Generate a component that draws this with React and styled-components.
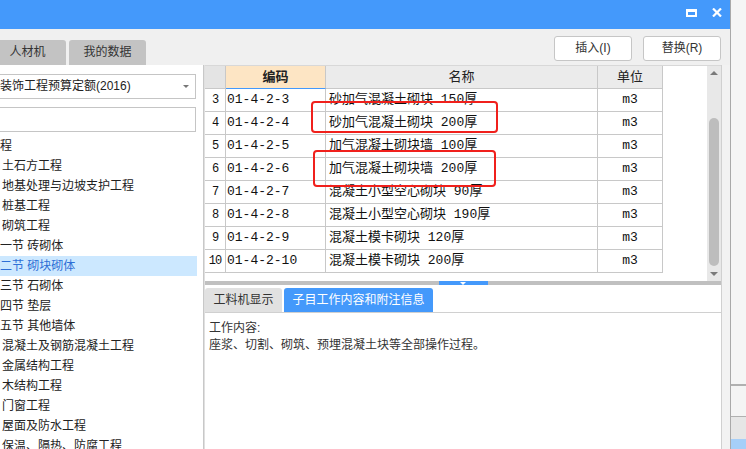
import React from "react";
import styled, { createGlobalStyle } from "styled-components";

const GlobalStyle = createGlobalStyle`
  html, body {
    margin: 0;
    padding: 0;
    overflow: hidden;
  }
  body {
    font-family: "Liberation Sans", "Noto Sans CJK SC", sans-serif;
    font-size: 12px;
    color: #222;
  }
`;

// the tree is scrolled sideways in the screenshot, so only the visible part of each label is kept
const tree = [
  { text: "程", level: 0 },
  { text: "土石方工程", level: 1 },
  { text: "地基处理与边坡支护工程", level: 1 },
  { text: "桩基工程", level: 1 },
  { text: "砌筑工程", level: 1 },
  { text: "一节 砖砌体", level: 2 },
  { text: "二节 砌块砌体", level: 2, selected: true },
  { text: "三节 石砌体", level: 2 },
  { text: "四节 垫层", level: 2 },
  { text: "五节 其他墙体", level: 2 },
  { text: "混凝土及钢筋混凝土工程", level: 1 },
  { text: "金属结构工程", level: 1 },
  { text: "木结构工程", level: 1 },
  { text: "门窗工程", level: 1 },
  { text: "屋面及防水工程", level: 1 },
  { text: "保温、隔热、防腐工程", level: 1 },
];

const rows = [
  { n: 3, code: "01-4-2-3", name: "砂加气混凝土砌块 150厚" },
  { n: 4, code: "01-4-2-4", name: "砂加气混凝土砌块 200厚" },
  { n: 5, code: "01-4-2-5", name: "加气混凝土砌块墙 100厚" },
  { n: 6, code: "01-4-2-6", name: "加气混凝土砌块墙 200厚" },
  { n: 7, code: "01-4-2-7", name: "混凝土小型空心砌块 90厚" },
  { n: 8, code: "01-4-2-8", name: "混凝土小型空心砌块 190厚" },
  { n: 9, code: "01-4-2-9", name: "混凝土模卡砌块 120厚" },
  { n: 10, code: "01-4-2-10", name: "混凝土模卡砌块 200厚" },
];

const indents = [0, 2, 0];

const App = () => {
  return (
    <Screen>
      <GlobalStyle />
      <Window>
        <TitleBar>
          <svg width="11" height="8" viewBox="0 0 11 8">
            <rect x="1" y="1" width="9" height="6" fill="none" stroke="#fff" strokeWidth="2" />
            <rect x="0" y="0" width="11" height="3" fill="#fff" />
          </svg>
          <svg width="10" height="9" viewBox="0 0 10 9">
            <path d="M1 0.5 L9 8.5 M9 0.5 L1 8.5" stroke="#fff" strokeWidth="2.2" />
          </svg>
        </TitleBar>

        <Toolbar>
          <TopTabs>
            <TopTab>人材机</TopTab>
            <TopTab>我的数据</TopTab>
          </TopTabs>
          <Buttons>
            <Button>插入(I)</Button>
            <Button>替换(R)</Button>
          </Buttons>
        </Toolbar>

        <Body>
          <LeftPanel>
            <Select>
              <span>装饰工程预算定额(2016)</span>
              <Caret />
            </Select>
            <Search />
            <TreeList>
              {tree.map((item, i) => (
                <TreeRow key={i} $indent={indents[item.level]} $selected={item.selected}>
                  {item.text}
                </TreeRow>
              ))}
            </TreeList>
          </LeftPanel>

          <RightPanel>
            <GridArea>
              <TableWrap>
                <HeadRow>
                  <HeadCell $num />
                  <HeadCell $active>编码</HeadCell>
                  <HeadCell>名称</HeadCell>
                  <HeadCell>单位</HeadCell>
                </HeadRow>
                {rows.map((r) => (
                  <Row key={r.n}>
                    <NumCell>{r.n}</NumCell>
                    <Cell>{r.code}</Cell>
                    <Cell $pad={3}>{r.name}</Cell>
                    <Cell $center>m3</Cell>
                  </Row>
                ))}
              </TableWrap>
              <VScroll>
                <ArrowBox>
                  <ArrowUp />
                </ArrowBox>
                <Track>
                  <Thumb />
                </Track>
                <ArrowBox>
                  <ArrowDown />
                </ArrowBox>
              </VScroll>
            </GridArea>

            <Splitter>
              <SplitHandle>
                <SmallDown />
              </SplitHandle>
            </Splitter>

            <BottomPanel>
              <BottomTabs>
                <BottomTab>工料机显示</BottomTab>
                <BottomTab $active>子目工作内容和附注信息</BottomTab>
              </BottomTabs>
              <Notes>
                <div>工作内容:</div>
                <div>座浆、切割、砌筑、预埋混凝土块等全部操作过程。</div>
              </Notes>
            </BottomPanel>
          </RightPanel>
          <Frame />
        </Body>

        <Mark $left={311} $top={101} $w={187} $h={32} />
        <Mark $left={313} $top={150} $w={183} $h={37} />
      </Window>

      <Behind>
        <BehindTop />
        <BehindLine />
        <BehindBand $h={30} $bg="#f4f4f4" />
        <BehindLine $thin />
        <BehindBand $h={22} $bg="#e6e6e6" />
        <BehindBand $h={10} $bg="#a6cff8" />
      </Behind>
    </Screen>
  );
};

export default App;

const Screen = styled.div`
  display: flex;
  width: 746px;
  height: 449px;
  overflow: hidden;
  background: #f3f3f3;
`;

const Window = styled.div`
  position: relative;
  display: flex;
  flex-direction: column;
  width: 730px;
  height: 449px;
  border-right: 1px solid #a9a9a9;
  background: #f0f0f0;
  flex-shrink: 0;
`;

const TitleBar = styled.div`
  height: 29px;
  background: #4499fb;
  display: flex;
  justify-content: flex-end;
  align-items: center;
  gap: 15px;
  padding-right: 8px;
  padding-bottom: 4px;
  box-sizing: border-box;
`;

const Toolbar = styled.div`
  height: 36px;
  display: flex;
  background: #f0f0f0;
`;

const TopTabs = styled.div`
  display: flex;
  align-self: flex-end;
  gap: 3px;
  margin-left: -11px;
`;

const TopTab = styled.div`
  width: 77px;
  height: 25px;
  line-height: 25px;
  text-align: center;
  background: #c3c3c3;
  border-radius: 3px 3px 0 0;
  color: #333;
  font-size: 12px;
`;

const Buttons = styled.div`
  margin-left: auto;
  display: flex;
  gap: 11px;
  padding: 7px 9px 0 0;
`;

const Button = styled.div`
  width: 78px;
  height: 25px;
  box-sizing: border-box;
  border: 1px solid #c6c6c6;
  border-radius: 3px;
  background: #fff;
  line-height: 23px;
  text-align: center;
  color: #333;
  font-size: 12px;
`;

const Body = styled.div`
  flex: 1;
  display: flex;
  min-height: 0;
`;

const LeftPanel = styled.div`
  width: 203px;
  border-right: 1px solid #c8c8c8;
  background: #fff;
  overflow: hidden;
  flex-shrink: 0;
  padding-top: 9px;
  box-sizing: content-box;
`;

const Select = styled.div`
  position: relative;
  margin-right: 7px;
  height: 25px;
  box-sizing: border-box;
  border: 1px solid #c5c5c5;
  border-left: none;
  line-height: 23px;
  font-size: 12px;
  color: #222;
  white-space: nowrap;
`;

const Caret = styled.span`
  position: absolute;
  right: 6px;
  top: 10px;
  border-left: 3px solid transparent;
  border-right: 3px solid transparent;
  border-top: 3px solid #777;
`;

const Search = styled.div`
  margin: 8px 7px 0 0;
  height: 25px;
  box-sizing: border-box;
  border: 1px solid #c5c5c5;
  border-left: none;
`;

const TreeList = styled.div`
  margin: 4px 6px 0 0;
`;

const TreeRow = styled.div`
  height: 20px;
  line-height: 20px;
  padding-left: ${(p) => p.$indent}px;
  white-space: nowrap;
  font-size: 12px;
  color: ${(p) => (p.$selected ? "#2e6fd6" : "#222")};
  background: ${(p) => (p.$selected ? "#cce8ff" : "transparent")};
`;

const RightPanel = styled.div`
  width: 516px;
  display: flex;
  flex-direction: column;
  border-left: 1px solid #e0e0e0;
  border-right: 1px solid #d0d0d0;
  background: #fff;
  flex-shrink: 0;
`;

const Frame = styled.div`
  flex: 1;
  background: #f2f2f2;
`;

const GridArea = styled.div`
  height: 216px;
  box-sizing: border-box;
  border-top: 1px solid #d8d8d8;
  display: flex;
`;

const TableWrap = styled.div`
  flex: 1;
  background: #fff;
  font-family: "Liberation Mono", "Noto Sans CJK SC", monospace;
  font-size: 13px;
  color: #111;
`;

const cols = "21px 100px 272px 65px";

const HeadRow = styled.div`
  display: grid;
  grid-template-columns: ${cols};
  height: 23px;
`;

const HeadCell = styled.div`
  box-sizing: border-box;
  border-right: 1px solid #c8c8c8;
  border-bottom: 1px solid ${(p) => (p.$active ? "#4499fb" : "#c8c8c8")};
  background: ${(p) => (p.$active ? "#fde5c4" : p.$num ? "#e4e4e4" : "#ebebeb")};
  font-family: "Liberation Sans", "Noto Sans CJK SC", sans-serif;
  font-weight: ${(p) => (p.$active ? 700 : 400)};
  font-size: 13px;
  line-height: 22px;
  text-align: center;
  color: #222;
`;

const Row = styled.div`
  display: grid;
  grid-template-columns: ${cols};
  height: 23px;
`;

const Cell = styled.div`
  box-sizing: border-box;
  border-right: 1px solid #c8c8c8;
  border-bottom: 1px solid #c8c8c8;
  padding-left: ${(p) => (p.$center ? 0 : p.$pad || 1)}px;
  text-align: ${(p) => (p.$center ? "center" : "left")};
  line-height: 22px;
  white-space: nowrap;
  overflow: hidden;
`;

const NumCell = styled(Cell)`
  padding-left: 0;
  text-align: center;
  font-size: 12px;
  letter-spacing: -1px;
`;

const VScroll = styled.div`
  width: 14px;
  background: #e8e8e8;
  display: flex;
  flex-direction: column;
`;

const ArrowBox = styled.div`
  height: 14px;
  display: flex;
  align-items: center;
  justify-content: center;
`;

const ArrowUp = styled.span`
  border-left: 4px solid transparent;
  border-right: 4px solid transparent;
  border-bottom: 4px solid #7a7a7a;
`;

const ArrowDown = styled.span`
  border-left: 4px solid transparent;
  border-right: 4px solid transparent;
  border-top: 4px solid #7a7a7a;
`;

const Track = styled.div`
  flex: 1;
  padding-top: 38px;
  display: flex;
  justify-content: center;
`;

const Thumb = styled.div`
  width: 10px;
  height: 148px;
  border-radius: 5px;
  background: #bdbdbd;
`;

const Splitter = styled.div`
  height: 4px;
  background: #c0c0c0;
  display: flex;
  justify-content: center;
`;

const SplitHandle = styled.div`
  width: 49px;
  height: 4px;
  background: #4499fb;
  display: flex;
  justify-content: center;
  align-items: center;
`;

const SmallDown = styled.span`
  border-left: 3px solid transparent;
  border-right: 3px solid transparent;
  border-top: 3px solid #fff;
`;

const BottomPanel = styled.div`
  flex: 1;
  background: #fff;
  padding-top: 3px;
  display: flex;
  flex-direction: column;
`;

const BottomTabs = styled.div`
  display: flex;
  gap: 2px;
`;

const BottomTab = styled.div`
  height: 24px;
  line-height: 24px;
  padding: 0 8px;
  border-radius: 3px 3px 0 0;
  font-size: 12px;
  background: ${(p) => (p.$active ? "#4499fb" : "#e1e1e1")};
  color: ${(p) => (p.$active ? "#fff" : "#333")};
  min-width: ${(p) => (p.$active ? 149 : 77)}px;
  box-sizing: border-box;
  text-align: center;
`;

const Notes = styled.div`
  flex: 1;
  border-top: 1px solid #d0d0d0;
  padding: 7px 4px;
  font-size: 12px;
  line-height: 17px;
  color: #333;
`;

const Mark = styled.div`
  position: absolute;
  left: ${(p) => p.$left}px;
  top: ${(p) => p.$top}px;
  width: ${(p) => p.$w}px;
  height: ${(p) => p.$h}px;
  box-sizing: border-box;
  border: 2px solid #f0201c;
  border-radius: 4px;
`;

const Behind = styled.div`
  flex: 1;
  display: flex;
  flex-direction: column;
  background: #f5f5f5;
`;

const BehindTop = styled.div`
  flex: 1;
`;

const BehindLine = styled.div`
  height: ${(p) => (p.$thin ? 1 : 2)}px;
  background: #b0b0b0;
`;

const BehindBand = styled.div`
  height: ${(p) => p.$h}px;
  background: ${(p) => p.$bg};
`;
